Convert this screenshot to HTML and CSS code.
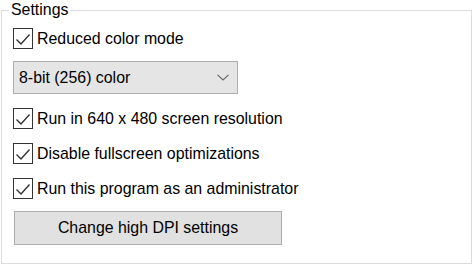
FILE: index.html
```html
<!DOCTYPE html>
<html>
<head>
<meta charset="utf-8">
<link rel="stylesheet" href="styles.css">
</head>
<body>
<fieldset class="group">
  <legend class="group-title">Settings</legend>
  <div class="row row-first">
    <span class="box"><svg viewBox="0 0 20 20" width="20" height="20"><path d="M3.5 10.5 L8 15 L16.5 5.5" fill="none" stroke="#333" stroke-width="1.4"/></svg></span>
    <span class="label">Reduced color mode</span>
  </div>
  <div class="select">
    <span class="select-text">8-bit (256) color</span>
    <svg class="chev" viewBox="0 0 12 7" width="12" height="7"><path d="M0.5 0.8 L6 6 L11.5 0.8" fill="none" stroke="#666" stroke-width="1.1"/></svg>
  </div>
  <div class="row">
    <span class="box"><svg viewBox="0 0 20 20" width="20" height="20"><path d="M3.5 10.5 L8 15 L16.5 5.5" fill="none" stroke="#333" stroke-width="1.4"/></svg></span>
    <span class="label">Run in 640 x 480 screen resolution</span>
  </div>
  <div class="row">
    <span class="box"><svg viewBox="0 0 20 20" width="20" height="20"><path d="M3.5 10.5 L8 15 L16.5 5.5" fill="none" stroke="#333" stroke-width="1.4"/></svg></span>
    <span class="label">Disable fullscreen optimizations</span>
  </div>
  <div class="row">
    <span class="box"><svg viewBox="0 0 20 20" width="20" height="20"><path d="M3.5 10.5 L8 15 L16.5 5.5" fill="none" stroke="#333" stroke-width="1.4"/></svg></span>
    <span class="label">Run this program as an administrator</span>
  </div>
  <div class="button">Change high DPI settings</div>
</fieldset>
</body>
</html>
```

FILE: styles.css
```css
html, body {
  margin: 0;
  padding: 0;
  background: #ffffff;
}
body {
  width: 473px;
  height: 265px;
  overflow: hidden;
  font-family: "Liberation Sans", Arial, sans-serif;
  font-size: 15.9px;
  color: #000;
}
.group {
  box-sizing: border-box;
  margin: 0 1px 1px 1px;
  width: 471px;
  height: 264px;
  border: 1px solid #dcdcdc;
  padding: 0 0 0 11px;
}
.group-title {
  margin-left: -4px;
  padding: 0 2px 0 2px;
  height: 20px;
  line-height: 20px;
}
.row {
  display: flex;
  align-items: center;
  gap: 4px;
  height: 21px;
  margin-top: 14px;
}
.row-first {
  margin-top: 8px;
}
.box {
  box-sizing: border-box;
  width: 20px;
  height: 21px;
  border: 1px solid #333;
  display: flex;
  align-items: center;
  justify-content: center;
  background: #fff;
}
.box svg {
  display: block;
  flex: none;
}
.label {
  line-height: 21px;
  white-space: nowrap;
}
.select {
  box-sizing: border-box;
  margin-top: 12px;
  margin-bottom: 1px;
  width: 225px;
  height: 33px;
  background: #e5e5e5;
  border: 1px solid #adadad;
  display: flex;
  align-items: center;
  justify-content: space-between;
  padding: 0 8px 0 5px;
}
.chev {
  display: block;
}
.button {
  box-sizing: border-box;
  margin-top: 12px;
  margin-left: 1px;
  width: 268px;
  height: 34px;
  background: #e1e1e1;
  border: 1px solid #adadad;
  display: flex;
  align-items: center;
  justify-content: center;
}
```
